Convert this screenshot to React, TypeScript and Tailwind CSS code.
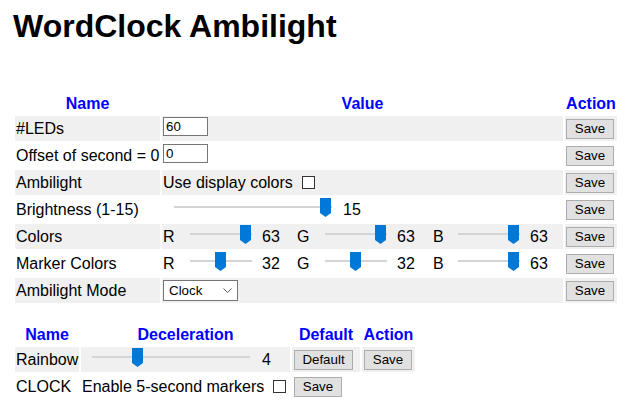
import type { ReactNode } from "react";

const Thumb = () => (
  <svg width="11" height="19" viewBox="0 0 11 19">
    <path d="M0 0H11V15L5.5 19L0 15Z" fill="#0078d7" />
  </svg>
);

// range input drawn by hand: track + thumb placed from the value
const Slider = ({
  wide,
  value,
  min,
  max,
}: {
  wide?: boolean;
  value: number;
  min: number;
  max: number;
}) => {
  const travel = wide ? 145 : 49;
  const left = 0.5 + ((value - min) / (max - min)) * travel;
  return (
    <div
      className={`relative self-start mt-[9px] h-[2px] bg-[#d4d4d4] ${
        wide ? "w-[158px]" : "w-[62px]"
      }`}
    >
      <div className="absolute top-[-8px]" style={{ left }}>
        <Thumb />
      </div>
    </div>
  );
};

const Button = ({ label, w = "w-[48px]" }: { label: string; w?: string }) => (
  <button
    className={`${w} h-[20px] bg-[#e1e1e1] border border-[#adadad] text-[13.33px] leading-none text-black`}
  >
    {label}
  </button>
);

const Checkbox = ({ className = "" }: { className?: string }) => (
  <span className={`inline-block w-[13px] h-[13px] border border-[#333] bg-white ${className}`} />
);

const Cell = ({
  gray,
  children,
  className = "",
}: {
  gray?: boolean;
  children?: ReactNode;
  className?: string;
}) => (
  <div
    className={`h-[25px] flex items-center whitespace-nowrap ${
      gray ? "bg-[#f0f0f0]" : ""
    } ${className}`}
  >
    {children}
  </div>
);

const Head = ({ children }: { children: ReactNode }) => (
  <div className="h-[20px] flex items-center justify-center font-bold text-[#0000ff]">
    {children}
  </div>
);

const Input = ({ value }: { value: string }) => (
  <div className="self-start mt-[1px] w-[45px] h-[19px] border border-[#767676] bg-white pl-[2px] text-[13.33px] leading-[17px]">
    {value}
  </div>
);

const ColorSet = ({ r, g, b }: { r: number; g: number; b: number }) => (
  <div className="flex items-center h-full">
    <span className="w-[27px]">R</span>
    <Slider value={r} min={0} max={63} />
    <span className="ml-[10px] w-[35px]">{r}</span>
    <span className="w-[28px]">G</span>
    <Slider value={g} min={0} max={63} />
    <span className="ml-[10px] w-[36px]">{g}</span>
    <span className="w-[25px]">B</span>
    <Slider value={b} min={0} max={63} />
    <span className="ml-[10px]">{b}</span>
  </div>
);

export default function App() {
  const rows: { name: string; value: ReactNode }[] = [
    { name: "#LEDs", value: <Input value="60" /> },
    { name: "Offset of second = 0", value: <Input value="0" /> },
    {
      name: "Ambilight",
      value: (
        <>
          <span>Use display colors</span>
          <Checkbox className="ml-[9px]" />
        </>
      ),
    },
    {
      name: "Brightness (1-15)",
      value: (
        <>
          <span className="w-[11px]" />
          <Slider wide value={15} min={1} max={15} />
          <span className="ml-[11px]">15</span>
        </>
      ),
    },
    { name: "Colors", value: <ColorSet r={63} g={63} b={63} /> },
    { name: "Marker Colors", value: <ColorSet r={32} g={32} b={63} /> },
    {
      name: "Ambilight Mode",
      value: (
        <div className="w-[75px] h-[21px] border border-[#767676] bg-white flex items-center justify-between pl-[5px] pr-[5px] text-[13.33px]">
          <span>Clock</span>
          <svg width="9" height="5" viewBox="0 0 9 5">
            <path d="M0.5 0.5L4.5 4.5L8.5 0.5" stroke="#555" fill="none" strokeWidth="1" />
          </svg>
        </div>
      ),
    },
  ];

  return (
    <div className="w-[629px] h-[414px] bg-white pl-[13px] text-[16px] text-black font-['Liberation_Sans',Arial,sans-serif]">
      <h1 className="pt-[8px] text-[32px] leading-[36px] font-bold">
        WordClock Ambilight
      </h1>

      {/* Settings table */}
      <div className="mt-[50px] ml-[2px] grid grid-cols-[145px_401px_52px] gap-[2px]">
        <Head>Name</Head>
        <Head>Value</Head>
        <Head>Action</Head>
        {rows.map((row, i) => (
          <div key={row.name} className="contents">
            <Cell gray={i % 2 === 0} className="pl-[1px]">
              {row.name}
            </Cell>
            <Cell gray={i % 2 === 0} className="pl-[1px]">
              {row.value}
            </Cell>
            <Cell gray={i % 2 === 0} className="pl-[1px]">
              <Button label="Save" />
            </Cell>
          </div>
        ))}
      </div>

      {/* Effects table */}
      <div className="mt-[22px] ml-[2px] grid grid-cols-[64px_209px_68px_53px] gap-[2px] w-fit">
        <Head>Name</Head>
        <Head>Deceleration</Head>
        <Head>Default</Head>
        <Head>Action</Head>

        <Cell gray className="pl-[1px]">Rainbow</Cell>
        <Cell gray className="pl-[1px]">
          <span className="w-[10px]" />
          <Slider wide value={4} min={1} max={12} />
          <span className="ml-[12px]">4</span>
        </Cell>
        <Cell gray className="pl-[2px]">
          <Button label="Default" w="w-[59px]" />
        </Cell>
        <Cell gray className="pl-[2px]">
          <Button label="Save" />
        </Cell>

        <Cell className="pl-[1px]">CLOCK</Cell>
        <Cell className="pl-[1px]">
          <span>Enable 5-second markers</span>
          <Checkbox className="ml-[9px]" />
        </Cell>
        <Cell className="pl-[2px]">
          <Button label="Save" />
        </Cell>
        <Cell />
      </div>
    </div>
  );
}
